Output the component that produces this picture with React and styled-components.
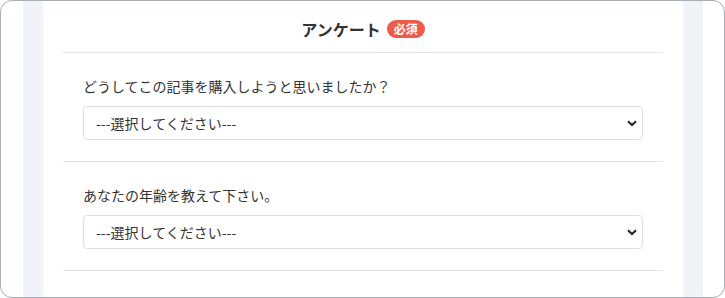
import React from 'react';
import styled, { createGlobalStyle } from 'styled-components';

const GlobalStyle = createGlobalStyle`
  html, body {
    margin: 0;
    padding: 0;
    background: #fff;
  }
  body {
    font-family: 'Noto Sans CJK JP', 'Noto Sans', sans-serif;
    color: #333;
  }
`;

const Frame = styled.div`
  box-sizing: border-box;
  width: 725px;
  height: 298px;
  border: 1px solid #a9adb4;
  border-radius: 12px;
  overflow: hidden;
  background: #fff;
  display: flex;
  padding: 0 21px 0 22px;
`;

const Gutter = styled.div`
  width: 20px;
  flex: none;
  background: #f2f3f8;
`;

const Card = styled.div`
  width: 640px;
  flex: none;
  padding: 0 20px;
  box-sizing: border-box;
`;

const Header = styled.div`
  height: 52px;
  box-sizing: border-box;
  border-bottom: 1px solid #e3e3e3;
  display: flex;
  align-items: center;
  justify-content: center;
  gap: 6px;
  padding-top: 5px;
`;

const Title = styled.h2`
  margin: 0;
  font-size: 16px;
  font-weight: 700;
  color: #333;
  line-height: 1;
`;

const Badge = styled.span`
  display: inline-flex;
  align-items: center;
  height: 18px;
  padding: 0 7px;
  border-radius: 9px;
  background: #ee5a4b;
  color: #fff;
  font-size: 12px;
  font-weight: 700;
  line-height: 1;
`;

const Question = styled.div`
  border-bottom: 1px solid #e3e3e3;
  padding: 22px 20px 21px;
`;

const Label = styled.p`
  margin: 0 0 9px;
  font-size: 14px;
  line-height: 22px;
  color: #333;
`;

const SelectWrap = styled.div`
  position: relative;
  width: 560px;
`;

const Select = styled.select`
  appearance: none;
  -webkit-appearance: none;
  display: block;
  width: 100%;
  height: 34px;
  box-sizing: border-box;
  border: 1px solid #dedede;
  border-radius: 4px;
  background: #fff;
  padding: 0 12px;
  font-family: inherit;
  font-size: 14px;
  color: #333;
  outline: none;
`;

const Chevron = styled.svg`
  position: absolute;
  right: 6px;
  top: 14px;
  pointer-events: none;
`;

const questions = [
  'どうしてこの記事を購入しようと思いましたか？',
  'あなたの年齢を教えて下さい。',
];

export default function App() {
  return (
    <>
      <GlobalStyle />
      <Frame>
        <Gutter />
        <Card>
          <Header>
            <Title>アンケート</Title>
            <Badge>必須</Badge>
          </Header>
          {questions.map((q) => (
            <Question key={q}>
              <Label>{q}</Label>
              <SelectWrap>
                <Select defaultValue="">
                  <option value="">---選択してください---</option>
                </Select>
                <Chevron width="10" height="7" viewBox="0 0 10 7">
                  <path d="M1 1.2 L5 5 L9 1.2" fill="none" stroke="#222" strokeWidth="2" />
                </Chevron>
              </SelectWrap>
            </Question>
          ))}
        </Card>
        <Gutter />
      </Frame>
    </>
  );
}
